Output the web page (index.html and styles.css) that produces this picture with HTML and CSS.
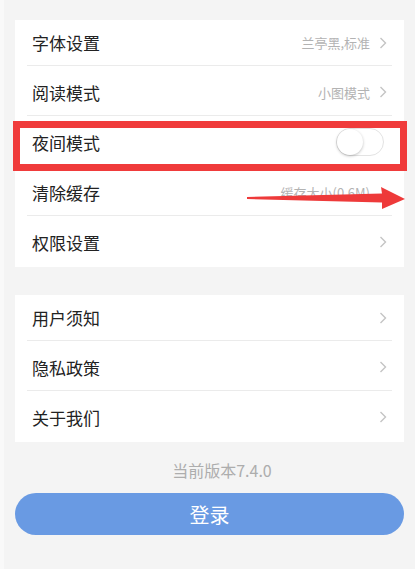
FILE: index.html
```html
<!DOCTYPE html>
<html lang="zh-CN">
<head>
    <meta charset="UTF-8">
    <meta name="viewport" content="width=device-width, initial-scale=1.0">
    <title>设置</title>
    <link rel="stylesheet" href="styles.css">
</head>
<body>
    <div class="settings-page">

        <!-- 阅读相关设置 -->
        <div class="settings-group">
            <div class="settings-row">
                <span class="row-label">字体设置</span>
                <span class="row-value">兰亭黑,标准</span>
                <svg class="chevron" viewBox="0 0 8 12"><path d="M1.5 1 L6.5 6 L1.5 11"/></svg>
            </div>
            <div class="settings-row">
                <span class="row-label">阅读模式</span>
                <span class="row-value">小图模式</span>
                <svg class="chevron" viewBox="0 0 8 12"><path d="M1.5 1 L6.5 6 L1.5 11"/></svg>
            </div>
            <div class="settings-row">
                <span class="row-label">夜间模式</span>
                <div class="switch"><div class="switch-knob"></div></div>
                <div class="mark-box"></div>
            </div>
            <div class="settings-row">
                <span class="row-label">清除缓存</span>
                <span class="row-value">缓存大小(0.6M)</span>
                <svg class="chevron hidden" viewBox="0 0 8 12"><path d="M1.5 1 L6.5 6 L1.5 11"/></svg>
                <!-- 标注箭头 -->
                <svg class="mark-arrow" viewBox="0 0 158 24" width="158" height="24">
                    <polygon points="0,11 135,7.5 134,1 158,13 135,23 135,16.5 0,13"/>
                </svg>
            </div>
            <div class="settings-row">
                <span class="row-label">权限设置</span>
                <svg class="chevron" viewBox="0 0 8 12"><path d="M1.5 1 L6.5 6 L1.5 11"/></svg>
            </div>
        </div>

        <!-- 关于 -->
        <div class="settings-group second">
            <div class="settings-row">
                <span class="row-label">用户须知</span>
                <svg class="chevron" viewBox="0 0 8 12"><path d="M1.5 1 L6.5 6 L1.5 11"/></svg>
            </div>
            <div class="settings-row">
                <span class="row-label">隐私政策</span>
                <svg class="chevron" viewBox="0 0 8 12"><path d="M1.5 1 L6.5 6 L1.5 11"/></svg>
            </div>
            <div class="settings-row">
                <span class="row-label">关于我们</span>
                <svg class="chevron" viewBox="0 0 8 12"><path d="M1.5 1 L6.5 6 L1.5 11"/></svg>
            </div>
        </div>

        <div class="version">当前版本7.4.0</div>
        <button class="login-btn">登录</button>
    </div>
</body>
</html>
```

FILE: styles.css
```css
/* Basic styling */
body {
    margin: 0;
    padding: 0;
    background-color: #f4f4f4;
    font-family: "Noto Sans CJK SC", "Noto Sans", sans-serif;
}

.settings-page {
    min-height: 569px;
    box-sizing: border-box;
    border-left: 4px solid #f9f9f9;
    padding: 20px 11px 0 11px;
}

.settings-group {
    background-color: #ffffff;
}

.settings-group.second {
    margin-top: 28px;
}

.settings-row {
    position: relative;
    display: flex;
    align-items: center;
    height: 50px;
    box-sizing: border-box;
    margin: 0 12px;
    padding: 3px 5px 0 5px;
    border-top: 1px solid #ebebeb;
}

.settings-row:first-child {
    height: 45px;
    padding-top: 0;
    border-top: none;
}

.settings-row:last-child {
    height: 52px;
    padding-top: 1px;
}

.row-label {
    flex-grow: 1;
    font-size: 17px;
    color: #222222;
}

.row-value {
    font-size: 13px;
    color: #b3b3b3;
    margin-right: 9px;
}

.chevron {
    width: 8px;
    height: 12px;
    fill: none;
    stroke: #c4c4c4;
    stroke-width: 1.4;
}

.chevron.hidden {
    visibility: hidden;
}

/* 开关（关闭状态） */
.switch {
    width: 48px;
    height: 28px;
    box-sizing: border-box;
    margin-right: 3px;
    border: 1px solid #e3e3e3;
    border-radius: 14px;
    background-color: #ffffff;
}

.switch-knob {
    width: 26px;
    height: 26px;
    border-radius: 50%;
    background-color: #ffffff;
    box-shadow: 0 1px 3px rgba(0, 0, 0, 0.25);
}

/* 红色标注 */
.mark-box {
    position: absolute;
    z-index: 2;
    left: -14px;
    top: 5px;
    width: 394px;
    height: 50px;
    box-sizing: border-box;
    border: 7px solid #f03b3b;
}

.mark-arrow {
    position: absolute;
    z-index: 2;
    left: 220px;
    top: 20px;
    fill: #ee3a3a;
}

.version {
    margin-top: 17px;
    padding-left: 25px;
    text-align: center;
    font-size: 16px;
    line-height: 22px;
    color: #adadad;
}

.login-btn {
    display: block;
    width: 100%;
    height: 42px;
    margin-top: 12px;
    border: none;
    border-radius: 21px;
    background-color: #699ae3;
    color: #ffffff;
    font-family: inherit;
    font-size: 20px;
}
```
